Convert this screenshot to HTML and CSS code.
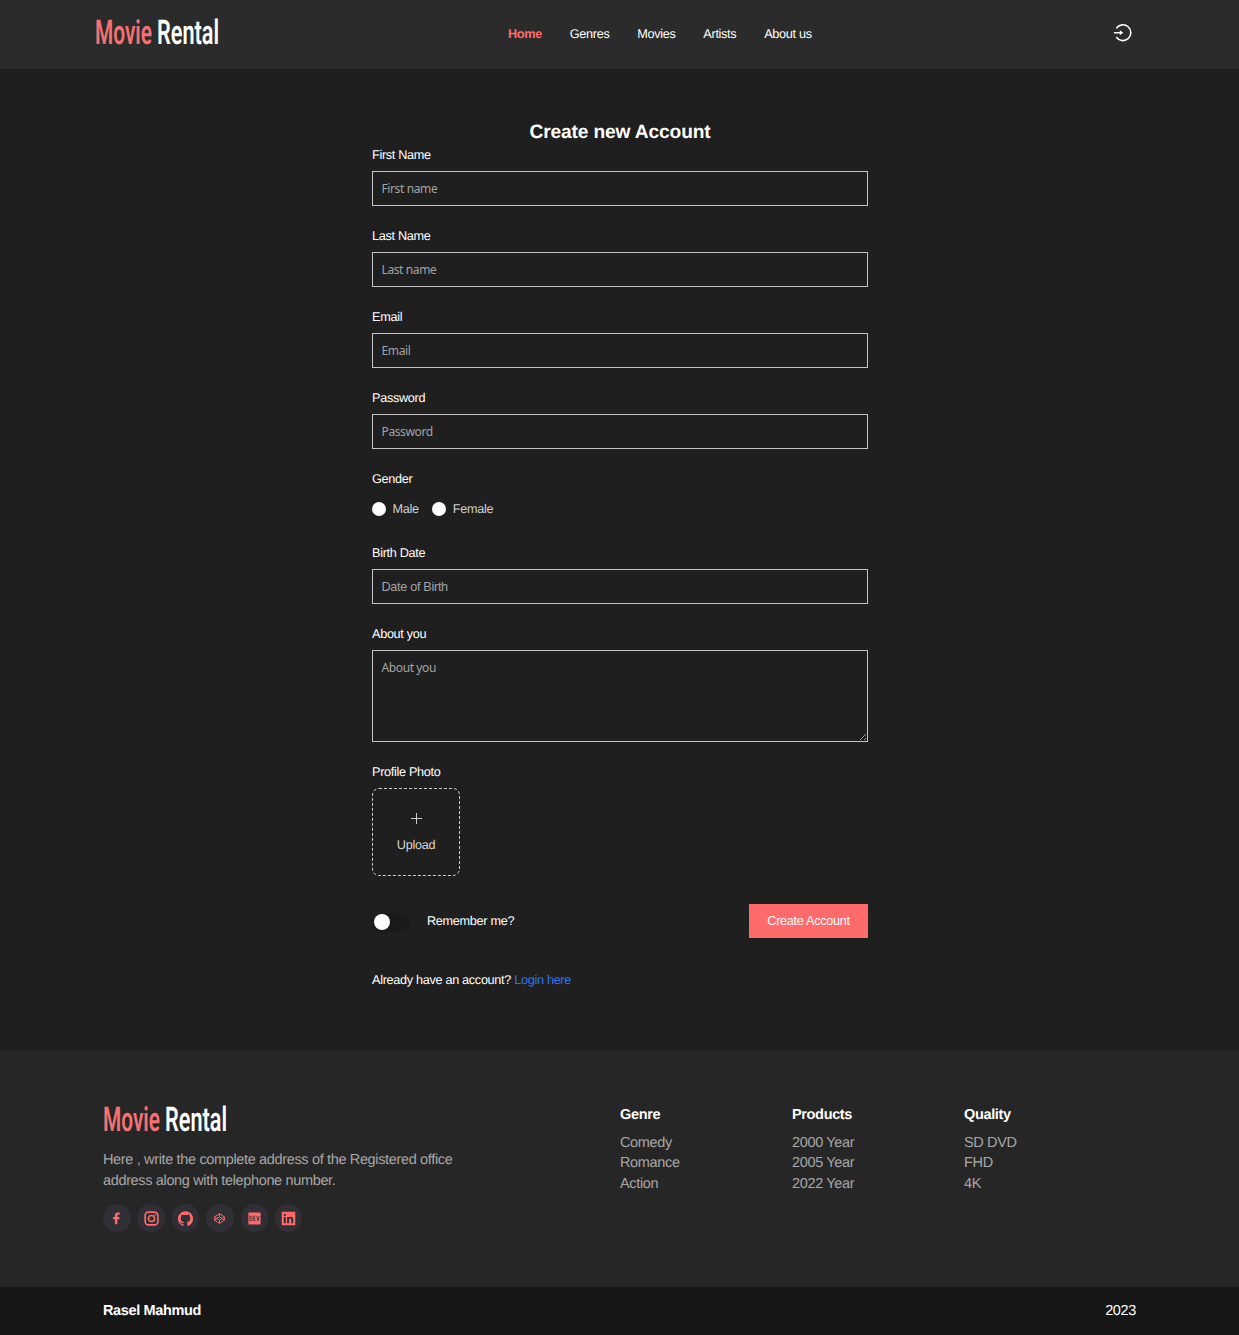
FILE: index.html
```html
<!DOCTYPE html>
<html lang="en">
<head>
<meta charset="utf-8">
<title>Movie Rental</title>
<link rel="stylesheet" href="styles.css">
</head>
<body>
<header class="header">
  <a class="logo"><svg width="57" height="40" viewBox="0 0 90 40" preserveAspectRatio="none"><text class="logo-movie" x="0" y="30" textLength="90" lengthAdjust="spacingAndGlyphs">Movie</text></svg><svg width="62" height="40" viewBox="0 0 98 40" preserveAspectRatio="none"><text class="logo-rental" x="0" y="30" textLength="98" lengthAdjust="spacingAndGlyphs">Rental</text></svg></a>
  <nav class="nav"><a class="active">Home</a><a>Genres</a><a>Movies</a><a>Artists</a><a>About us</a></nav>
  <a class="login"><svg width="20" height="20" viewBox="0 0 20 20" fill="none" stroke="#fff" stroke-width="1.6"><path d="M3.300 5.400A7.900 7.900 0 1 1 3.300 14M1 9.700h7"/><path d="M6.800 7.200v5l3.500-2.500z" fill="#fff" stroke="none"/></svg></a>
</header>
<main class="main">
  <form class="form">
    <h1>Create new Account</h1>
    <div class="field"><label>First Name</label><input type="text" placeholder="First name"></div>
    <div class="field"><label>Last Name</label><input type="text" placeholder="Last name"></div>
    <div class="field"><label>Email</label><input type="text" placeholder="Email"></div>
    <div class="field"><label>Password</label><input type="password" placeholder="Password"></div>
    <div class="field"><label>Gender</label><div class="radios"><span class="radio"></span><span>Male</span><span class="radio second"></span><span>Female</span></div></div>
    <div class="field"><label>Birth Date</label><input class="date" type="text" placeholder="Date of Birth"></div>
    <div class="field"><label>About you</label><textarea placeholder="About you"></textarea></div>
    <div class="field photo"><label>Profile Photo</label>
      <div class="upload"><svg class="upload-frame" width="88" height="88"><rect x=".5" y=".5" width="87" height="87" rx="6.5"/></svg><svg width="11" height="11" viewBox="0 0 11 11" stroke="#ccc"><path d="M5.500 0v11M0 5.500h11"/></svg><span>Upload</span></div>
    </div>
    <div class="actions"><span class="switch"><span class="knob"></span></span><span>Remember me?</span><button type="button">Create Account</button></div>
    <p class="signin">Already have an account? <a>Login here</a></p>
  </form>
</main>
<footer class="footer">
  <section class="about">
    <div class="logo"><svg width="57" height="40" viewBox="0 0 90 40" preserveAspectRatio="none"><text class="logo-movie" x="0" y="30" textLength="90" lengthAdjust="spacingAndGlyphs">Movie</text></svg><svg width="62" height="40" viewBox="0 0 98 40" preserveAspectRatio="none"><text class="logo-rental" x="0" y="30" textLength="98" lengthAdjust="spacingAndGlyphs">Rental</text></svg></div>
    <p>Here , write the complete address of the Registered office address along with telephone number.</p>
    <div class="social">
      <a><svg viewBox="0 0 16 16"><path d="M6.300 14V8.900H4.300V6.400h2V4.900c0-2.100 1.300-3.300 3.200-3.300l1.900.1v2.300h-1.200c-1 0-1.300.5-1.300 1.200v1.200h2.400l-.3 2.500H8.900V14z"/></svg></a>
      <a><svg viewBox="0 0 16 16"><rect class="line" x="1.200" y="1.200" width="13.600" height="13.600" rx="3.600" stroke-width="1.700"/><circle class="line" cx="8" cy="8" r="3.300" stroke-width="1.600"/><circle cx="11.900" cy="4.100" r=".9"/></svg></a>
      <a><svg viewBox="0 0 16 16"><path d="M8 .300C3.600.300 0 3.900 0 8.300c0 3.500 2.300 6.500 5.500 7.600.4.100.5-.2.500-.4v-1.400c-2.200.5-2.700-1-2.700-1-.4-.9-.9-1.200-.9-1.200-.7-.5.1-.5.1-.5.800.1 1.200.8 1.200.8.700 1.200 1.900.9 2.300.700.1-.5.300-.9.500-1.100-1.800-.2-3.600-.9-3.600-4 0-.9.300-1.600.8-2.100-.1-.2-.4-1 .1-2.100 0 0 .7-.2 2.200.8a7.500 7.500 0 0 1 4 0c1.500-1 2.200-.8 2.200-.8.4 1.100.2 1.900.1 2.100.5.600.8 1.300.8 2.100 0 3.100-1.900 3.800-3.700 4 .3.200.6.700.6 1.500v2.200c0 .2.100.5.600.4A8 8 0 0 0 8 .300z"/></svg></a>
      <a><svg viewBox="0 0 16 16"><path class="line" d="M8 2.800l5.300 3.500v3.400L8 13.200 2.700 9.700V6.300zM8 2.800v3.400M8 9.800v3.400M2.700 6.300L8 9.800l5.300-3.500M2.700 9.700L8 6.200l5.300 3.500"/></svg></a>
      <a><svg viewBox="0 0 16 16"><rect x="1.500" y="1.500" width="13" height="13" rx="1"/><path class="cut" d="M3.200 5.500v5h.8c1 0 1.400-.6 1.400-1.400V6.900c0-.8-.4-1.400-1.400-1.400zM9.100 5.500H7.300v5h1.800M7.300 8h1.500M10.500 5.500l1.200 5 1.200-5"/></svg></a>
      <a><svg viewBox="0 0 16 16"><path fill-rule="evenodd" d="M1.500.8h13q.7 0 .7.700v13q0 .7-.7.700h-13q-.7 0-.7-.7v-13q0-.7.700-.7zM3 6.300V13h2.100V6.300zM4.050 3a1.200 1.200 0 1 0 .01 0zM6.500 6.300V13h2.100V9.600c0-1.100.5-1.700 1.200-1.700s1.100.5 1.100 1.600V13H13V9.200c0-2-1-3-2.500-3-1 0-1.600.5-1.900 1v-.9z"/></svg></a>
    </div>
  </section>
  <section class="links"><h2>Genre</h2><a>Comedy</a><a>Romance</a><a>Action</a></section>
  <section class="links"><h2>Products</h2><a>2000 Year</a><a>2005 Year</a><a>2022 Year</a></section>
  <section class="links"><h2>Quality</h2><a>SD DVD</a><a>FHD</a><a>4K</a></section>
</footer>
<div class="bottom"><strong>Rasel Mahmud</strong><span>2023</span></div>
</body>
</html>
```
FILE: styles.css
```css
* { box-sizing: border-box; }
body {
  margin: 0;
  background: #1f1f1f;
  color: #fff;
  font-family: "Liberation Sans", Arial, sans-serif;
  font-size: 12.7px;
  letter-spacing: -.32px;
  line-height: 20px;
  text-rendering: geometricPrecision;
}
svg { display: block; }
.header {
  height: 69px;
  padding: 0 106px 0 95px;
  display: flex;
  align-items: flex-start;
  background: #2b2b2b;
}
.logo { display: flex; gap: 5px; }
.header .logo { padding-top: 14px; width: 413px; }
.logo text { font: 600 34px Roboto, sans-serif; letter-spacing: 0; }
.logo-movie { fill: #f47174; }
.logo-rental { fill: #fff; }
.nav { display: flex; gap: 27.8px; padding-top: 24px; }
.nav .active { color: #ff6b6b; font-weight: 700; }
.login { margin: 23px 0 0 auto; }
.main { height: 981px; padding-top: 50px; }
.form { width: 496px; margin: 0 auto 0 372px; }
h1 {
  margin: 0;
  font-size: 19.2px;
  letter-spacing: -.15px;
  line-height: 27px;
  height: 26px;
  text-align: center;
}
.field { margin-bottom: 20px; display: flex; flex-direction: column; }
.field label { margin-bottom: 6px; }
input, textarea {
  display: block;
  width: 100%;
  height: 35px;
  margin: 0;
  padding: 0 8.5px;
  border: 1px solid #c4c4c4;
  border-radius: 0;
  outline: 0;
  background: transparent;
  color: #fff;
  font: 12.04px "Noto Sans", "Open Sans", sans-serif;
  letter-spacing: -.4px;
}
input.date { font: 12.7px "Liberation Sans", Arial, sans-serif; letter-spacing: -.32px; }
textarea { height: 92px; padding-top: 8px; resize: vertical; }
::placeholder { color: #a3a3a3; opacity: 1; }
.radios { height: 28px; display: flex; align-items: center; color: #d0d0d0; }
.radio { width: 14px; height: 14px; border-radius: 50%; background: #fff; margin-right: 6.5px; }
.radio.second { margin-left: 13.5px; }
.photo { margin-bottom: 28px; }
.upload {
  position: relative;
  width: 88px;
  height: 88px;
  padding-top: 3px;
  display: flex;
  flex-direction: column;
  align-items: center;
  justify-content: center;
  gap: 11px;
  color: #d4d4d4;
}
.upload-frame { position: absolute; inset: 0; fill: none; stroke: #d0d0d0; stroke-dasharray: 3 2; }
.actions { display: flex; align-items: center; height: 34px; }
.switch {
  width: 38px;
  height: 19px;
  margin: 2px 17px 0 0;
  padding: 1.5px;
  border-radius: 10px;
  background: #1a1a1a;
}
.knob { display: block; width: 16px; height: 16px; border-radius: 50%; background: #fff; }
button {
  margin-left: auto;
  width: 119px;
  height: 34px;
  padding: 0;
  border: 0;
  background: #ff6b6b;
  color: #fff;
  font: inherit;
  letter-spacing: inherit;
}
.signin { margin: 32px 0 0; }
.signin a { color: #2f74f0; }
.footer {
  height: 237px;
  padding: 51px 0 0 103px;
  display: flex;
  background: #262626;
  color: #a6a6a6;
  font-size: 14.5px;
  letter-spacing: -.35px;
  line-height: 20.64px;
}
.about { width: 517px; }
.about p { width: 370px; margin: 9px 0 13px; }
.social { display: flex; gap: 6.9px; }
.social a {
  width: 27.5px;
  height: 27.5px;
  border-radius: 50%;
  background: #2f2f35;
  display: flex;
  align-items: center;
  justify-content: center;
}
.social svg { width: 15px; height: 15px; fill: #ff6b6b; }
.social .line { fill: none; stroke: #ff6b6b; }
.social .cut { fill: none; stroke: #2f2f35; stroke-width: .9; }
.links { width: 172px; padding-top: 4px; display: flex; flex-direction: column; }
.links h2 { margin: 0 0 7px; color: #fff; font-size: 14.5px; line-height: 20.64px; }
.bottom {
  height: 48px;
  padding: 0 103px;
  display: flex;
  align-items: center;
  justify-content: space-between;
  background: #171717;
  font-size: 14.5px;
  letter-spacing: -.35px;
}
```
